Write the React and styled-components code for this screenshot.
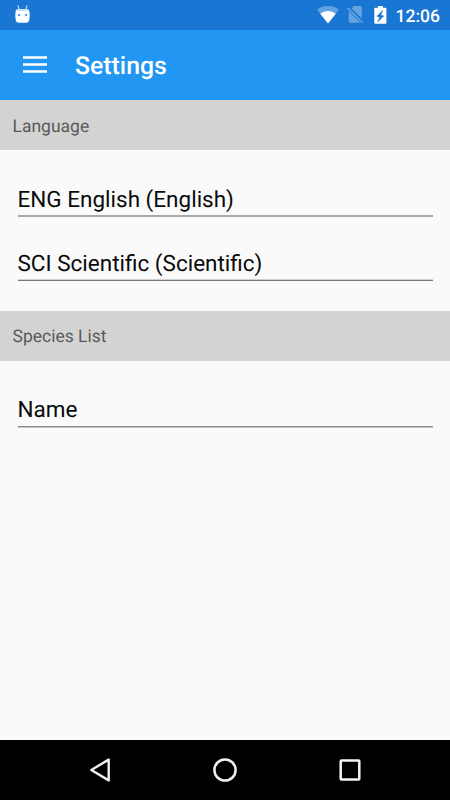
import React from "react";
import styled, { createGlobalStyle } from "styled-components";

const Colors = {
  statusBar: "#1976d2",
  primary: "#2196f3",
  divider: "#d3d3d3",
  background: "#fafafa",
  label: "#5a5a5a",
  text: "#0a0a0a",
  white: "#ffffff",
};

// soft / line: the two pixel rows of the underline below each field
const sections = [
  {
    title: "Language",
    fields: [
      { label: "ENG English (English)", soft: "#a8a8a8", line: "#a8a8a8" },
      { label: "SCI Scientific (Scientific)", soft: "#d0d0d0", line: "#777777" },
    ],
  },
  {
    title: "Species List",
    fields: [{ label: "Name", soft: "#8e8e8e", line: "#c4c4c4" }],
  },
];

export default function App() {
  return (
    <>
      <GlobalStyle />
      <Screen>
        <StatusBar>
          <DroidIcon />
          <StatusIcons>
            <WifiIcon />
            <NoSimIcon />
            <BatteryIcon />
            <Clock>12:06</Clock>
          </StatusIcons>
        </StatusBar>
        <AppBar>
          <MenuButton aria-label="Menu">
            <svg width="24" height="18" viewBox="0 0 24 18">
              <path
                d="M0 1.6h24M0 8.6h24M0 15.6h24"
                stroke="#fff"
                strokeWidth="2.5"
              />
            </svg>
          </MenuButton>
          <Title>Settings</Title>
        </AppBar>
        <Content>
          {sections.map(({ title, fields }) => (
            <Section key={title}>
              <SectionHeader>{title}</SectionHeader>
              <FieldList>
                {fields.map(({ label, soft, line }) => (
                  <Field key={label} $soft={soft} $line={line}>
                    {label}
                  </Field>
                ))}
              </FieldList>
            </Section>
          ))}
        </Content>
        <NavBar>
          <NavButton aria-label="Back">
            <svg width="30" height="30" viewBox="0 0 30 30">
              <path
                d="M23.7 4.6v20.8L6.3 15z"
                fill="none"
                stroke="#f0f0f0"
                strokeWidth="2.4"
                strokeLinejoin="round"
              />
            </svg>
          </NavButton>
          <NavButton aria-label="Home">
            <svg width="30" height="30" viewBox="0 0 30 30">
              <circle
                cx="15"
                cy="15"
                r="10.6"
                fill="none"
                stroke="#f0f0f0"
                strokeWidth="2.5"
              />
            </svg>
          </NavButton>
          <NavButton aria-label="Recent apps">
            <svg width="30" height="30" viewBox="0 0 30 30">
              <rect
                x="5.7"
                y="5.6"
                width="18.6"
                height="18.8"
                rx="0.7"
                fill="none"
                stroke="#f4f4f4"
                strokeWidth="2.5"
              />
            </svg>
          </NavButton>
        </NavBar>
      </Screen>
    </>
  );
}

function DroidIcon() {
  return (
    <svg width="16" height="20" viewBox="0 0 16 20">
      <path
        d="M3 0.8l1.2 3.6M12 0.8l-1.2 3.6"
        stroke="#d3e6f9"
        strokeWidth="1.1"
        strokeLinecap="round"
      />
      <path
        d="M3.2 4.1h8.6q2.4 0 2.7 2.6.5 4.2-.2 8-.4 3-3.3 3H4q-2.9 0-3.3-3-.7-3.8-.2-8Q.8 4.1 3.2 4.1z"
        fill="#fff"
      />
      <path d="M3 4.2h9q1 .3 1.5 1.6h-12Q2 4.5 3 4.2z" fill="#bcd8f4" />
      <path d="M3 9h2.2v2H3zM9.9 9h2.2v2H9.9z" fill="#5a9fe2" />
    </svg>
  );
}

function WifiIcon() {
  return (
    <svg width="22" height="18" viewBox="0 0 22 18">
      <path d="M0 3.6Q4.8 0 11 0t11 3.6L11 17.4z" fill="#fff" opacity="0.32" />
      <path d="M3.2 7.7Q6.7 5.1 11 5.1t7.8 2.6L11 17.4z" fill="#fff" />
    </svg>
  );
}

function NoSimIcon() {
  return (
    <svg width="17" height="18" viewBox="0 0 17 18">
      <g fill="#fff" opacity="0.33">
        <path d="M7 0h6.2q1.6 0 1.6 1.6v11L4.5 2.4z" />
        <path d="M1.7 5.2v10q0 1.6 1.6 1.6h9.8z" />
        <path d="M1.2 1.3L0 2.5 15 17.6l1.2-1.2z" />
      </g>
    </svg>
  );
}

function BatteryIcon() {
  return (
    <svg width="13" height="18" viewBox="0 0 13 18">
      <path
        d="M4 0h4.8v1.8h2.5q1.1 0 1.1 1.1v13.8q0 1.1-1.1 1.1H1.4q-1.1 0-1.1-1.1V2.9q0-1.1 1.1-1.1H4z"
        fill="#fff"
      />
      <path
        d="M8.9 4.2L2.8 10.2l2.9 1-2.1 4.8 6.2-6-3-1z"
        fill={Colors.statusBar}
        stroke={Colors.statusBar}
        strokeWidth="0.4"
      />
    </svg>
  );
}

const GlobalStyle = createGlobalStyle`
  body {
    margin: 0;
    font-family: Roboto, "Liberation Sans", sans-serif;
    text-rendering: geometricPrecision;
  }
`;

const Screen = styled.div`
  display: flex;
  flex-direction: column;
  width: 450px;
  height: 800px;
  background: ${Colors.background};
`;

const StatusBar = styled.header`
  display: flex;
  justify-content: space-between;
  align-items: center;
  box-sizing: border-box;
  height: 30px;
  padding: 0 10px 0 15px;
  background: ${Colors.statusBar};
`;

const StatusIcons = styled.div`
  display: flex;
  align-items: center;
  svg:nth-child(2) {
    margin-left: 8px;
  }
  svg:nth-child(3) {
    margin-left: 10px;
  }
`;

const Clock = styled.span`
  margin-left: 9px;
  padding-top: 4px;
  color: ${Colors.white};
  font-size: 17.5px;
  font-weight: 500;
  line-height: 26px;
`;

const AppBar = styled.div`
  display: flex;
  align-items: center;
  height: 70px;
  padding-left: 23px;
  background: ${Colors.primary};
`;

const MenuButton = styled.button`
  display: flex;
  padding: 0;
  border: 0;
  background: none;
`;

const Title = styled.h1`
  margin: 4px 0 0 28px;
  color: ${Colors.white};
  font-size: 24.8px;
  font-weight: 500;
  line-height: 30px;
`;

const Content = styled.main`
  flex: 1;
`;

const SectionHeader = styled.h2`
  box-sizing: border-box;
  height: 50px;
  margin: 0;
  padding: 2px 12.5px 0;
  background: ${Colors.divider};
  color: ${Colors.label};
  font-size: 17.5px;
  font-weight: 400;
  line-height: 50px;
`;

const FieldList = styled.div`
  display: flex;
  flex-direction: column;
  gap: 27px;
  padding: 30px 17.5px;
`;

const Field = styled.div`
  box-sizing: border-box;
  height: 37px;
  border-bottom: 1px solid ${({ $line }) => $line};
  box-shadow: inset 0 -1px ${({ $soft }) => $soft};
  color: ${Colors.text};
  font-size: 22.5px;
  line-height: 40px;
`;

const Section = styled.section`
  &:last-child ${SectionHeader} {
    padding-top: 1px;
  }
  &:last-child ${Field} {
    line-height: 38px;
  }
`;

const NavBar = styled.nav`
  display: flex;
  justify-content: center;
  align-items: center;
  gap: 95px;
  height: 60px;
  background: #000;
`;

const NavButton = styled(MenuButton)``;
